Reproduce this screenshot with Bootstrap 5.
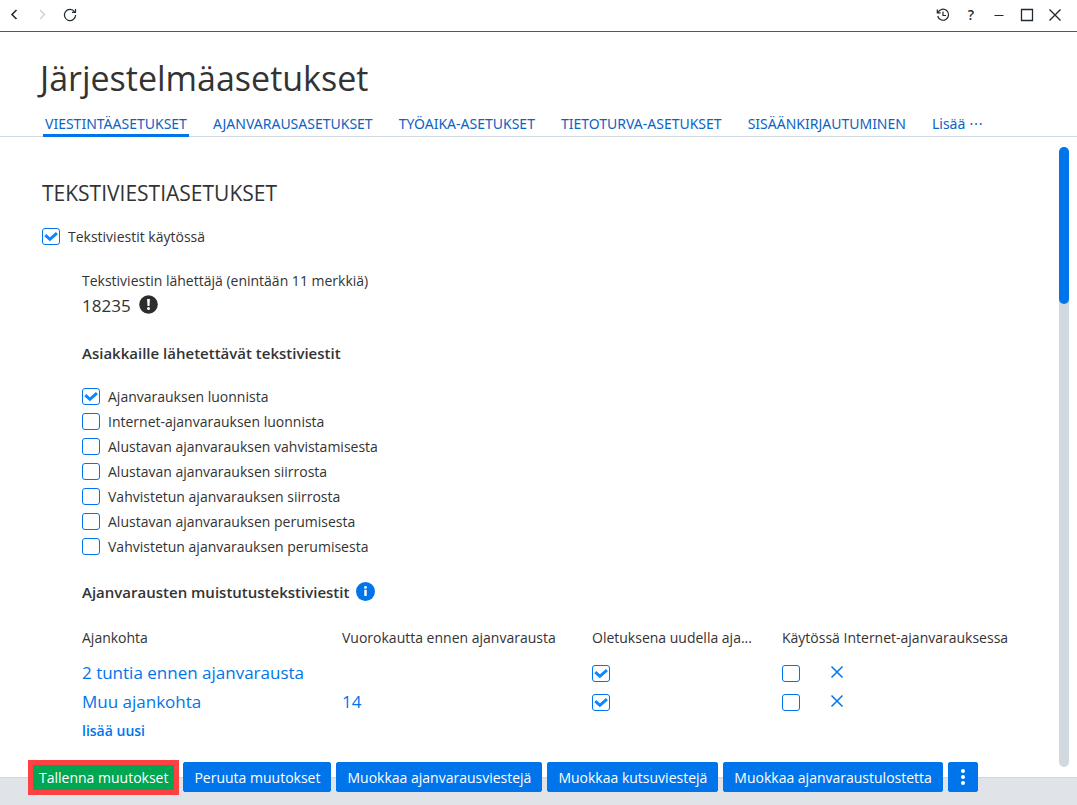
<!doctype html>
<html lang="fi">
<head>
<meta charset="utf-8">
<meta name="viewport" content="width=device-width, initial-scale=1">
<title>Järjestelmäasetukset</title>
<link href="https://cdn.jsdelivr.net/npm/bootstrap@5.3.0/dist/css/bootstrap.min.css" rel="stylesheet">
<style>
  :root { --accent: #0075eb; --ink: #333; --line: #d1d9e0; }
  body { font-family: "Open Sans", "Noto Sans", sans-serif; font-size: 14px; line-height: 25px; color: var(--ink); background: #fff; }
  .titlebar { height: 32px; border-bottom: 1px solid #3d58a0; padding: 0 14px 2px 6px; }
  .tools { gap: 12px; }
  .tool { width: 16px; height: 16px; padding: 0; border: 0; background: none; color: #1f2a33; display: flex; }
  .tool svg { display: block; }
  .tool:disabled { color: #ccd6de; }
  .page-head { border-bottom: 1px solid var(--line); padding: 23px 40px 0; }
  .page-head h1 { font-size: 34px; line-height: 46px; margin: 0 0 13px; font-weight: 400; }
  .tabs { font-family: "Noto Sans", sans-serif; gap: 22px; margin: 0 0 -1px 3px; line-height: 20px; flex-wrap: nowrap; }
  .tabs .nav-link { padding: 0 2px; color: #0b63c4; border-bottom: 3px solid transparent; white-space: nowrap; }
  .tabs .nav-link.active { border-color: var(--accent); }
  .pane { padding: 42px 0 0 42px; min-width: 0; }
  .pane h2 { font-size: 21px; line-height: 28px; margin: 0 0 17px; font-weight: 400; }
  .pane h3 { font-size: 15px; line-height: 25px; margin: 0; font-weight: 600; }
  .pane h3.list-title { margin: 23px 0 18px; }
  .table-title { gap: 7px; margin: 21px 0 20px; }
  .hint { margin-top: 2px; }
  .group { padding-left: 40px; }
  .opt { min-height: 25px; display: flex; align-items: center; gap: 8px; }
  .form-check-input.tick { float: none; flex: none; display: block; width: 18px; height: 17px; margin: 0; border: 1px solid var(--accent); border-radius: 3px; background-color: #fff; }
  .form-check-input.tick:checked { background-color: #fff; background-size: 18px 17px; background-position: center;
    background-image: url("data:image/svg+xml,%3Csvg xmlns='http://www.w3.org/2000/svg' viewBox='0 0 18 17'%3E%3Cpath d='M3.3 7.2l4.6 4.1 7-6.2' fill='none' stroke='%230d86ff' stroke-width='3'/%3E%3C/svg%3E"); }
  .big { font-size: 17px; }
  .sender { line-height: 20px; margin: 22px 0 2px; }
  .reminders { table-layout: fixed; width: 100%; }
  .reminders th { font-weight: 400; padding: 0 0 9px; white-space: nowrap; }
  .reminders td { padding: 0; height: 29px; vertical-align: middle; }
  .reminders td.big { line-height: 27px; vertical-align: top; }
  .c-time { width: 260px; } .c-days { width: 250px; } .c-default { width: 190px; } .c-net { width: 48px; }
  .pane a { color: var(--accent); text-decoration: none; }
  .pane a.add { line-height: 28px; }
  .remove { color: var(--accent); border: 0; padding: 0; background: none; display: block; }
  .remove svg { display: block; margin-bottom: 3px; }
  .track { width: 10px; margin: 10px 8px; background: var(--line); border-radius: 5px; }
  .thumb { height: 25.3%; background: var(--accent); border-radius: 5px; }
  .actions { background: #e0e4e9; border-top: 1px solid #d0d7de; height: 28px; padding-left: 28px; }
  .actions .bar { gap: 5px; margin-top: -18px; height: 35px; }
  .actions .btn { font-size: 14px; line-height: 20px; padding: 5px 10px 3px; height: 30px; margin-top: 2px; border-radius: 2px; color: #fff; background: var(--accent); border: 1px solid var(--accent); white-space: nowrap; }
  .actions .btn.save { background: #00a651; border: 5px solid #ff4141; border-radius: 0; height: 35px; margin: 0 -1px 0 0; padding: 2px 6px; }
  .actions .btn.more { padding: 4px 10px; }
</style>
</head>
<body class="min-vh-100 d-flex flex-column">
<header class="titlebar d-flex align-items-center justify-content-between">
  <div class="tools d-flex">
    <button class="tool" aria-label="Takaisin"><svg width="16" height="16" fill="none" stroke="currentColor" stroke-width="1.6"><path d="M10.500 3L6 7.500l4.500 4.500"/></svg></button>
    <button class="tool" aria-label="Eteenpäin" disabled><svg width="16" height="16" fill="none" stroke="currentColor" stroke-width="1.600"><path d="M6 3l4.500 4.500L6 12"/></svg></button>
    <button class="tool" aria-label="Päivitä"><svg width="16" height="16" fill="none" stroke="currentColor" stroke-width="1.200"><path d="M12.600 4.800A5.600 5.600 0 1 0 13.600 8"/><path d="M10 5.400h3.500V2"/></svg></button>
  </div>
  <div class="tools d-flex">
    <button class="tool" aria-label="Historia"><svg width="16" height="16" fill="none" stroke="currentColor" stroke-width="1.200"><path d="M3 5.500A5.500 5.500 0 1 1 2.700 9M2.300 2.500v3.300h3.300M8 4.500V8.500h3"/></svg></button>
    <button class="tool justify-content-center align-items-center fw-semibold" aria-label="Ohje">?</button>
    <button class="tool" aria-label="Pienennä"><svg width="16" height="16" fill="none" stroke="currentColor"><path d="M3.500 8.500h9"/></svg></button>
    <button class="tool" aria-label="Suurenna"><svg width="16" height="16" fill="none" stroke="currentColor" stroke-width="1.300"><path d="M2.500 2.500h11v11h-11z"/></svg></button>
    <button class="tool" aria-label="Sulje"><svg width="16" height="16" fill="none" stroke="currentColor" stroke-width="1.400"><path d="M2.500 2.500l11 11M13.500 2.500l-11 11"/></svg></button>
  </div>
</header>

<div class="page-head">
  <h1>Järjestelmäasetukset</h1>
  <nav class="nav tabs">
    <a class="nav-link active" aria-current="page" href="#">VIESTINTÄASETUKSET</a>
    <a class="nav-link" href="#">AJANVARAUSASETUKSET</a>
    <a class="nav-link" href="#">TYÖAIKA-ASETUKSET</a>
    <a class="nav-link" href="#">TIETOTURVA-ASETUKSET</a>
    <a class="nav-link" href="#">SISÄÄNKIRJAUTUMINEN</a>
    <a class="nav-link" href="#">Lisää ⋯</a>
  </nav>
</div>

<div class="d-flex flex-grow-1">
  <main class="pane flex-grow-1">
    <h2>TEKSTIVIESTIASETUKSET</h2>
    <div class="opt"><input class="form-check-input tick" type="checkbox" id="sms" checked><label for="sms">Tekstiviestit käytössä</label></div>
    <div class="group">
      <p class="sender">Tekstiviestin lähettäjä (enintään 11 merkkiä)</p>
      <div class="d-flex align-items-start gap-2"><span class="big">18235</span>
        <svg class="hint" width="19" height="19" viewBox="0 0 19 19" aria-hidden="true"><circle cx="9.500" cy="9.500" r="9.300" fill="#2d2d2d"/><path d="M8.100 4h2.800l-.4 7h-2z" fill="#fff"/><circle cx="9.500" cy="13.400" r="1.500" fill="#fff"/></svg></div>
      <h3 class="list-title">Asiakkaille lähetettävät tekstiviestit</h3>
      <div class="opt"><input class="form-check-input tick" type="checkbox" id="m1" checked><label for="m1">Ajanvarauksen luonnista</label></div>
      <div class="opt"><input class="form-check-input tick" type="checkbox" id="m2"><label for="m2">Internet-ajanvarauksen luonnista</label></div>
      <div class="opt"><input class="form-check-input tick" type="checkbox" id="m3"><label for="m3">Alustavan ajanvarauksen vahvistamisesta</label></div>
      <div class="opt"><input class="form-check-input tick" type="checkbox" id="m4"><label for="m4">Alustavan ajanvarauksen siirrosta</label></div>
      <div class="opt"><input class="form-check-input tick" type="checkbox" id="m5"><label for="m5">Vahvistetun ajanvarauksen siirrosta</label></div>
      <div class="opt"><input class="form-check-input tick" type="checkbox" id="m6"><label for="m6">Alustavan ajanvarauksen perumisesta</label></div>
      <div class="opt"><input class="form-check-input tick" type="checkbox" id="m7"><label for="m7">Vahvistetun ajanvarauksen perumisesta</label></div>
      <div class="table-title d-flex align-items-start"><h3>Ajanvarausten muistutustekstiviestit</h3>
        <svg class="hint" width="19" height="19" viewBox="0 0 19 19" aria-hidden="true"><circle cx="9.500" cy="9.500" r="9.500" fill="#0075eb"/><path d="M8.300 7.800h2.400V14H8.300z" fill="#fff"/><circle cx="9.500" cy="5.400" r="1.400" fill="#fff"/></svg></div>
      <table class="reminders">
        <colgroup><col class="c-time"><col class="c-days"><col class="c-default"><col class="c-net"><col></colgroup>
        <thead><tr><th>Ajankohta</th><th>Vuorokautta ennen ajanvarausta</th><th>Oletuksena uudella aja...</th><th colspan="2">Käytössä Internet-ajanvarauksessa</th></tr></thead>
        <tbody>
          <tr><td class="big"><a href="#">2 tuntia ennen ajanvarausta</a></td><td></td><td><input class="form-check-input tick" type="checkbox" aria-label="Oletuksena" checked></td><td><input class="form-check-input tick" type="checkbox" aria-label="Käytössä"></td><td><button class="remove" aria-label="Poista"><svg width="14" height="14" fill="none" stroke="currentColor" stroke-width="1.500"><path d="M1.500 1.500l11 11M12.500 1.500l-11 11"/></svg></button></td></tr>
          <tr><td class="big"><a href="#">Muu ajankohta</a></td><td class="big"><a href="#">14</a></td><td><input class="form-check-input tick" type="checkbox" aria-label="Oletuksena" checked></td><td><input class="form-check-input tick" type="checkbox" aria-label="Käytössä"></td><td><button class="remove" aria-label="Poista"><svg width="14" height="14" fill="none" stroke="currentColor" stroke-width="1.500"><path d="M1.500 1.500l11 11M12.500 1.500l-11 11"/></svg></button></td></tr>
        </tbody>
      </table>
      <a class="add fw-semibold d-inline-block" href="#">lisää uusi</a>
    </div>
  </main>
  <div class="track flex-shrink-0"><div class="thumb"></div></div>
</div>

<footer class="actions">
  <div class="bar d-flex align-items-start">
    <button class="btn save">Tallenna muutokset</button>
    <button class="btn">Peruuta muutokset</button>
    <button class="btn">Muokkaa ajanvarausviestejä</button>
    <button class="btn">Muokkaa kutsuviestejä</button>
    <button class="btn">Muokkaa ajanvaraustulostetta</button>
    <button class="btn more" aria-label="Lisää toimintoja"><svg class="d-block" width="8" height="20" fill="#fff"><circle cx="4" cy="4" r="2"/><circle cx="4" cy="10" r="2"/><circle cx="4" cy="16" r="2"/></svg></button>
  </div>
</footer>
<script src="https://cdn.jsdelivr.net/npm/bootstrap@5.3.0/dist/js/bootstrap.bundle.min.js"></script>
</body>
</html>
